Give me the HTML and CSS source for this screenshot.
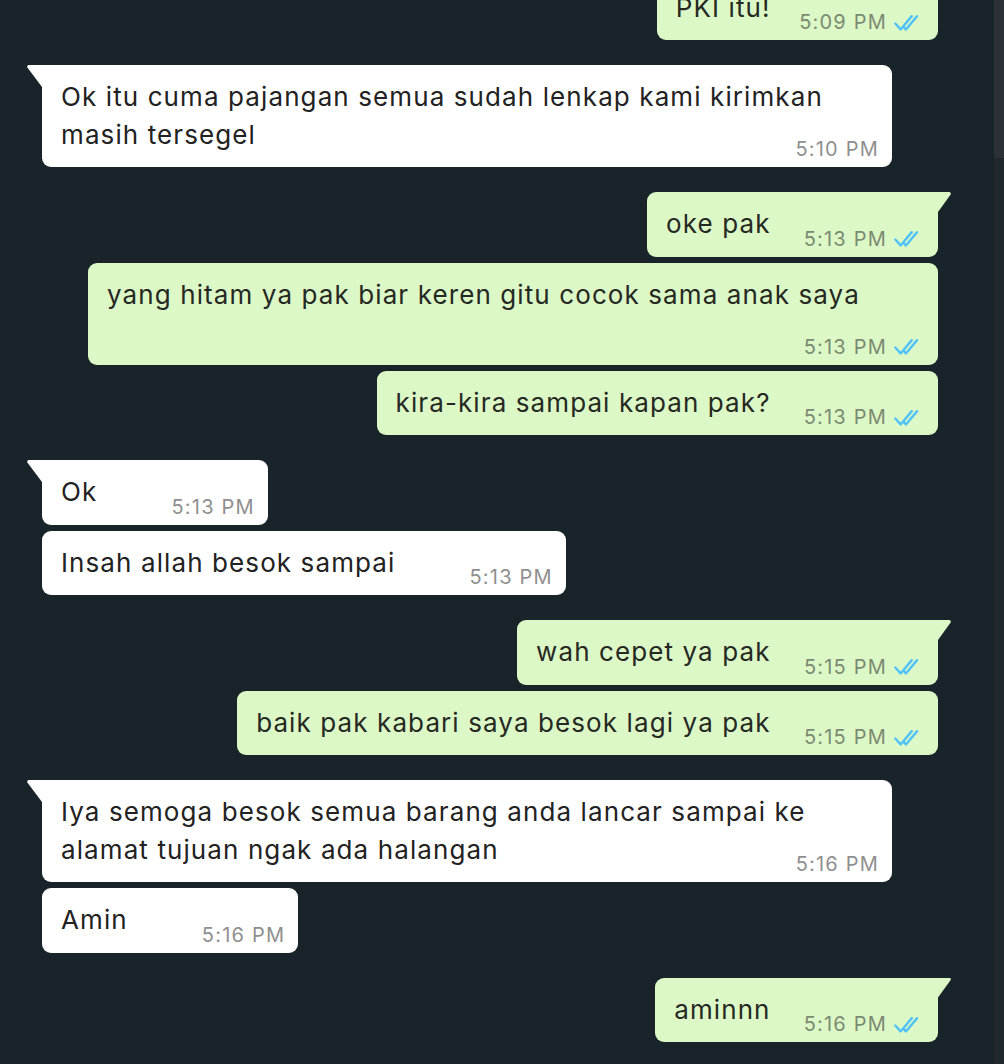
FILE: index.html
```html
<!DOCTYPE html>
<html lang="id">
<head>
<meta charset="utf-8">
<title>Chat</title>
<link rel="stylesheet" href="styles.css">
</head>
<body>
<div class="screen">
  <div class="chat">
    <div class="list">
      <div class="group out">
        <div class="bubble tail">PKI itu! <span class="spacer"></span><span class="meta">5:09 PM<svg class="check" viewBox="0 0 26 16" width="28" height="17"><path d="M2 9 L7 14.5 L17.5 2 M10 12 L12 14.5 L22.5 2"/></svg></span></div>
      </div>
      <div class="group in">
        <div class="bubble tail">Ok itu cuma pajangan semua sudah lenkap kami kirimkan masih tersegel <span class="spacer"></span><span class="meta">5:10 PM</span></div>
      </div>
      <div class="group out">
        <div class="bubble tail">oke pak <span class="spacer"></span><span class="meta">5:13 PM<svg class="check" viewBox="0 0 26 16" width="28" height="17"><path d="M2 9 L7 14.5 L17.5 2 M10 12 L12 14.5 L22.5 2"/></svg></span></div>
        <div class="bubble">yang hitam ya pak biar keren gitu cocok sama anak saya <span class="spacer"></span><span class="meta">5:13 PM<svg class="check" viewBox="0 0 26 16" width="28" height="17"><path d="M2 9 L7 14.5 L17.5 2 M10 12 L12 14.5 L22.5 2"/></svg></span></div>
        <div class="bubble">kira-kira sampai kapan pak? <span class="spacer"></span><span class="meta">5:13 PM<svg class="check" viewBox="0 0 26 16" width="28" height="17"><path d="M2 9 L7 14.5 L17.5 2 M10 12 L12 14.5 L22.5 2"/></svg></span></div>
      </div>
      <div class="group in">
        <div class="bubble tail">Ok <span class="spacer"></span><span class="meta">5:13 PM</span></div>
        <div class="bubble">Insah allah besok sampai <span class="spacer"></span><span class="meta">5:13 PM</span></div>
      </div>
      <div class="group out">
        <div class="bubble tail">wah cepet ya pak <span class="spacer"></span><span class="meta">5:15 PM<svg class="check" viewBox="0 0 26 16" width="28" height="17"><path d="M2 9 L7 14.5 L17.5 2 M10 12 L12 14.5 L22.5 2"/></svg></span></div>
        <div class="bubble">baik pak kabari saya besok lagi ya pak <span class="spacer"></span><span class="meta">5:15 PM<svg class="check" viewBox="0 0 26 16" width="28" height="17"><path d="M2 9 L7 14.5 L17.5 2 M10 12 L12 14.5 L22.5 2"/></svg></span></div>
      </div>
      <div class="group in">
        <div class="bubble tail">Iya semoga besok semua barang anda lancar sampai ke alamat tujuan ngak ada halangan <span class="spacer"></span><span class="meta">5:16 PM</span></div>
        <div class="bubble">Amin <span class="spacer"></span><span class="meta">5:16 PM</span></div>
      </div>
      <div class="group out">
        <div class="bubble tail">aminnn <span class="spacer"></span><span class="meta">5:16 PM<svg class="check" viewBox="0 0 26 16" width="28" height="17"><path d="M2 9 L7 14.5 L17.5 2 M10 12 L12 14.5 L22.5 2"/></svg></span></div>
      </div>
    </div>
  </div>
  <div class="scrollbar"><div class="thumb"></div></div>
</div>
</body>
</html>
```

FILE: styles.css
```css
html, body {
  margin: 0;
  padding: 0;
}
body {
  background: #19232a;
  overflow: hidden;
  font-family: Inter, "Noto Sans", "Liberation Sans", sans-serif;
}
.screen {
  display: flex;
  height: 1064px;
  overflow: hidden;
}
.chat {
  flex: 1;
  overflow: hidden;
}
.list {
  display: flex;
  flex-direction: column;
  gap: 25px;
  padding: 0 56px 0 42px;
  margin-top: -24.5px;
}
.group {
  display: flex;
  flex-direction: column;
  gap: 6px;
}
.group.in { align-items: flex-start; }
.group.out { align-items: flex-end; }

.bubble {
  position: relative;
  max-width: 850px;
  box-sizing: border-box;
  padding: 13px 19px 14px;
  border-radius: 9px;
  font-size: 26px;
  letter-spacing: 1.1px;
  line-height: 37.5px;
  color: #222222;
}
.in .bubble { background: #ffffff; }
.out .bubble { background: #dcf8c6; color: #262923; }

.in .bubble.tail { border-top-left-radius: 0; }
.out .bubble.tail { border-top-right-radius: 0; }
.in .bubble.tail::before {
  content: "";
  position: absolute;
  left: -15px;
  top: 0;
  width: 15px;
  height: 22px;
  background: #ffffff;
  clip-path: polygon(1px 0, 100% 0, 100% 100%, 0 2px);
}
.out .bubble.tail::after {
  content: "";
  position: absolute;
  right: -13px;
  top: 0;
  width: 13px;
  height: 20px;
  background: #dcf8c6;
  clip-path: polygon(0 0, calc(100% - 1px) 0, 100% 2px, 0 100%);
}

.spacer {
  display: inline-block;
  width: 143px;
  height: 1px;
}
.out .spacer {
  width: 140px;
}
.meta {
  position: absolute;
  right: 13px;
  bottom: 8px;
  display: flex;
  align-items: center;
  gap: 6px;
  font-size: 20px;
  letter-spacing: 1.2px;
  line-height: 20px;
  white-space: nowrap;
  color: #8f8f8f;
}
.out .meta {
  right: 17px;
  color: #7b8a72;
}
.check {
  fill: none;
  stroke: #4fc3f7;
  stroke-width: 2.2;
  stroke-linecap: round;
  stroke-linejoin: round;
}

.scrollbar {
  width: 10px;
  flex: none;
  background: #20272d;
}
.thumb {
  height: 158px;
  background: #2b3137;
}
```
